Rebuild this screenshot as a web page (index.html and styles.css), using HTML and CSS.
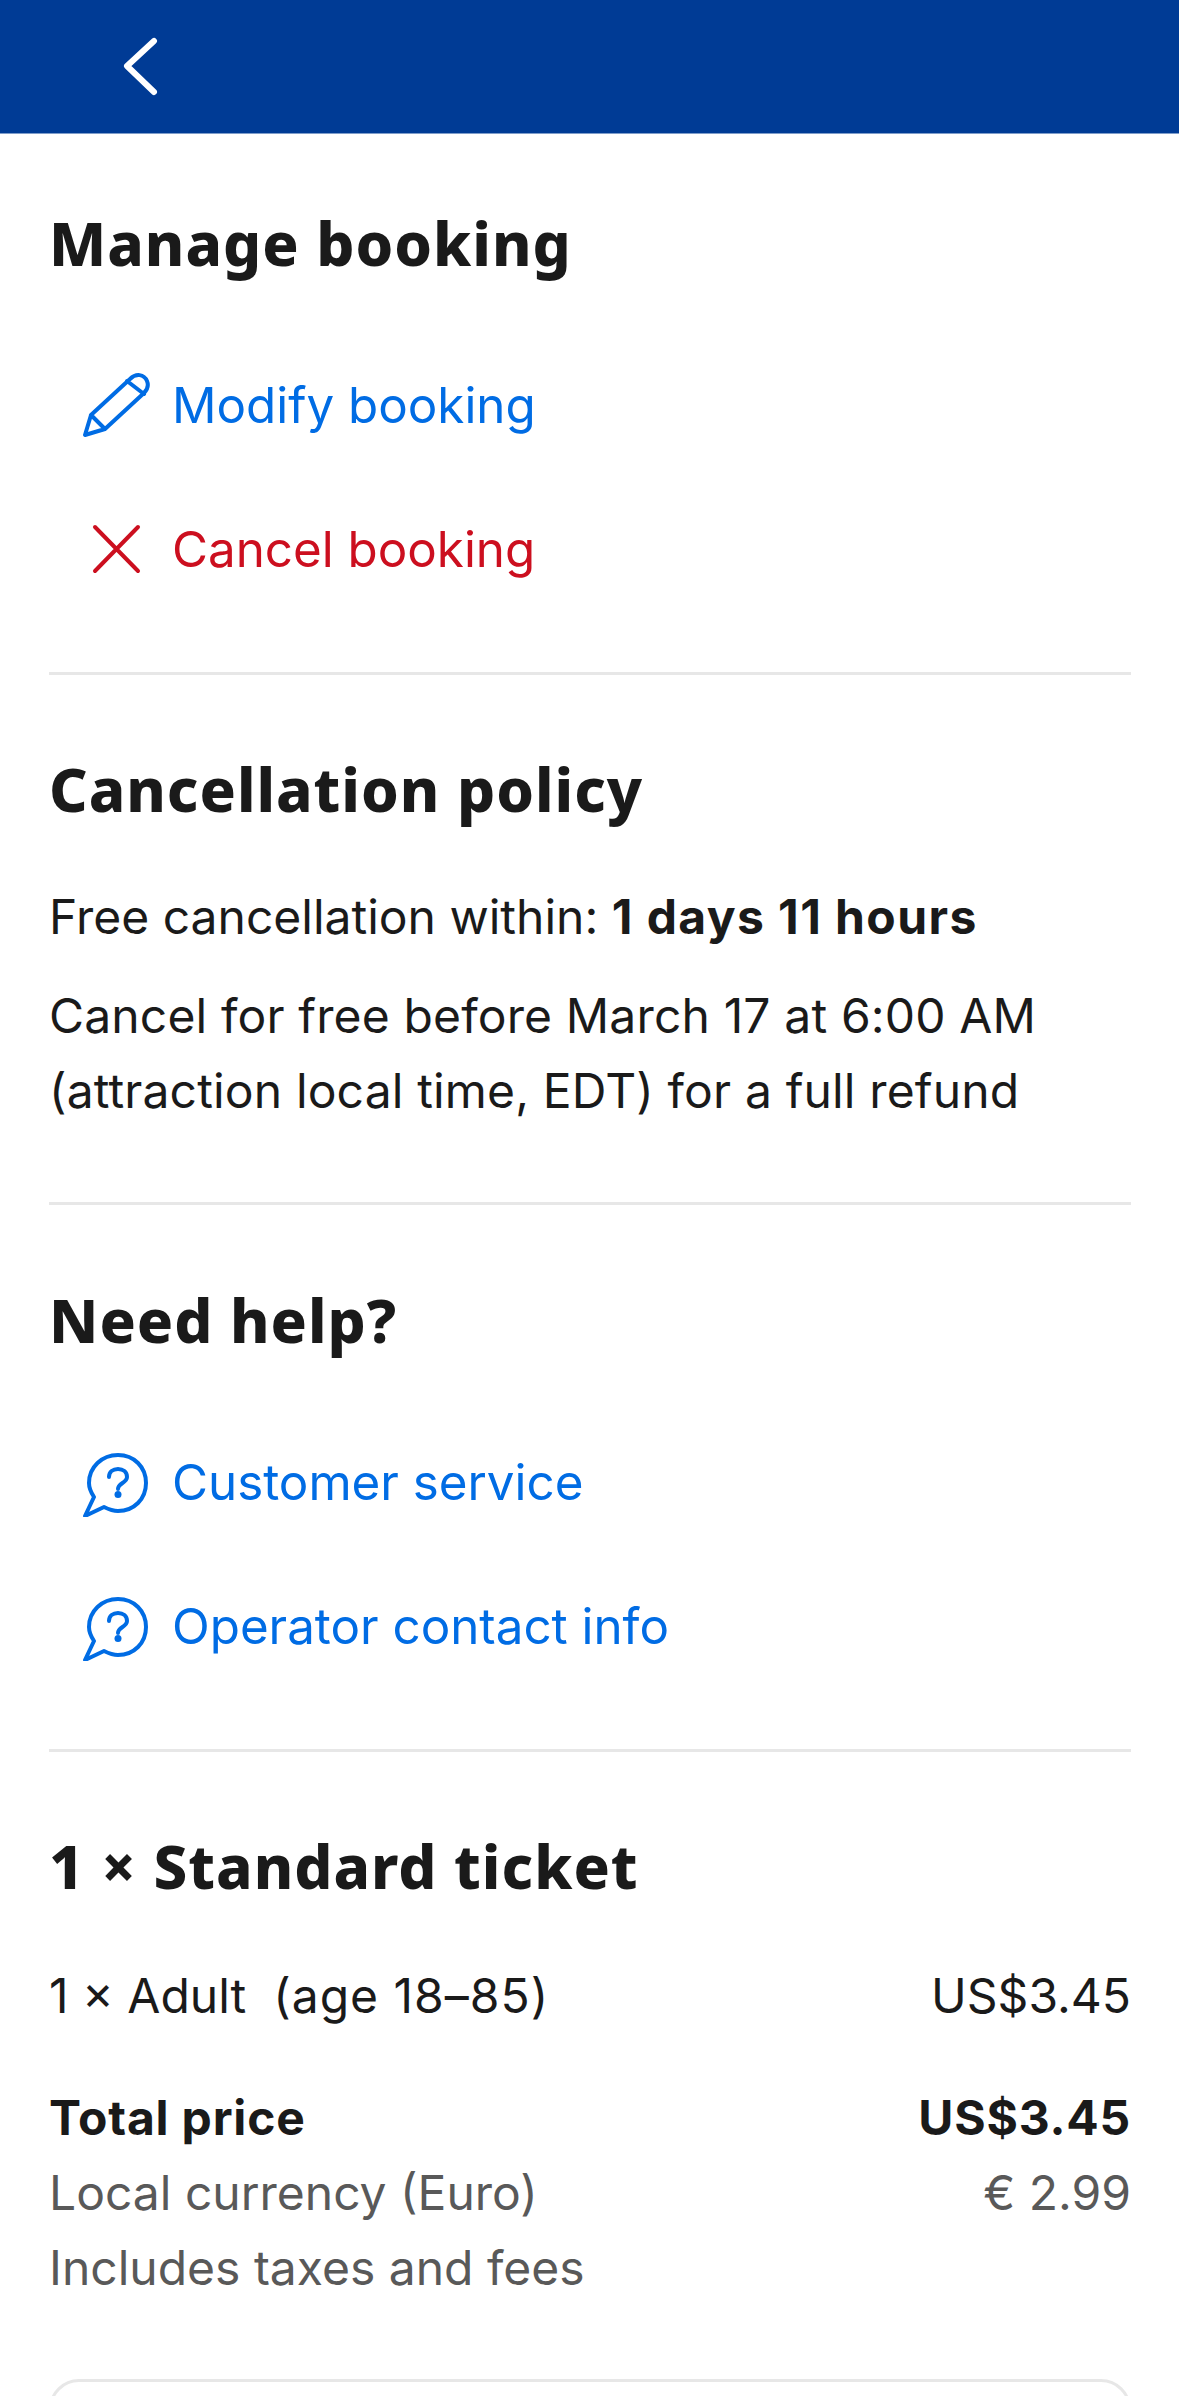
FILE: index.html
```html
<!DOCTYPE html>
<html lang="en">
<head>
<meta charset="utf-8">
<title>Manage booking</title>
<link rel="stylesheet" href="styles.css">
</head>
<body>
<div class="page">
  <header class="topbar">
    <svg class="back" viewBox="0 0 40 60" aria-hidden="true"><path d="M33 4 6 29 33 55"/></svg>
  </header>
  <main class="content">
    <section class="section links-section first">
      <h2 class="title">Manage booking</h2>
      <a class="row blue">
        <svg class="icon" viewBox="20 22 70 70" aria-hidden="true"><path d="M25 87 31 67 70 31C76 25 84 26 87 33 89 38 87 42 84 45L45 81ZM31 67 45 81M67 33 84 46"/></svg>
        <span>Modify booking</span>
      </a>
      <a class="row red">
        <svg class="icon" viewBox="0 0 70 70" aria-hidden="true"><path d="M15 13 58 57M58 13 15 57"/></svg>
        <span>Cancel booking</span>
      </a>
    </section>
    <section class="section policy">
      <h2 class="title">Cancellation policy</h2>
      <p class="free">Free cancellation within: <strong class="wide">1 days 11 hours</strong></p>
      <p class="para">Cancel for free before March 17 at 6:00 AM (attraction local time, EDT) for a full refund</p>
    </section>
    <section class="section links-section">
      <h2 class="title">Need help?</h2>
      <a class="row blue">
        <svg class="icon" viewBox="20 16 70 70" aria-hidden="true"><path d="M25 85 34 66C30 60 29 56 29 52 29 36 42 24 58 24S86 36 86 52 74 80 58 80C54 80 50 79 44 76ZM49 46C49 41 53 38 58 38S67 41 67 46C67 52 58 52 58 58"/><circle class="dot" cx="58" cy="63.500" r="3.500"/></svg>
        <span>Customer service</span>
      </a>
      <a class="row blue">
        <svg class="icon" viewBox="20 16 70 70" aria-hidden="true"><path d="M25 85 34 66C30 60 29 56 29 52 29 36 42 24 58 24S86 36 86 52 74 80 58 80C54 80 50 79 44 76ZM49 46C49 41 53 38 58 38S67 41 67 46C67 52 58 52 58 58"/><circle class="dot" cx="58" cy="63.500" r="3.500"/></svg>
        <span>Operator contact info</span>
      </a>
    </section>
    <section class="ticket">
      <h2 class="title">1 × Standard ticket</h2>
      <div class="line adult"><span>1 × Adult &nbsp;<span class="age">(age 18–85)</span></span><span>US$3.45</span></div>
      <div class="line total"><strong>Total price</strong><strong>US$3.45</strong></div>
      <div class="line muted"><span>Local currency (Euro)</span><span>€ 2.99</span></div>
      <div class="line muted"><span>Includes taxes and fees</span></div>
      <div class="card"></div>
    </section>
  </main>
</div>
</body>
</html>
```
FILE: styles.css
```css
* { box-sizing: border-box; }
html, body { margin: 0; padding: 0; background: #fff; }
.page {
  height: 2396px;
  overflow: hidden;
  font-family: Inter, "Liberation Sans", sans-serif;
  font-size: 48px;
  line-height: 75px;
  color: #1a1a1a;
}
.topbar {
  height: 134px;
  background: #003b95;
  border-bottom: 1px solid #7f9dca;
  display: flex;
  align-items: flex-start;
  padding: 37px 0 0 121px;
}
.back { width: 40px; height: 60px; fill: none; stroke: #fff; stroke-width: 6; stroke-linecap: round; stroke-linejoin: round; }
.content { padding: 0 48px 0 49px; }
.section { border-bottom: 3px solid #e7e7e7; }
.links-section { padding-top: 75px; padding-bottom: 51px; }
.links-section.first { padding-top: 69px; }
.title {
  margin: 0;
  font-family: "Noto Sans", sans-serif;
  font-size: 60px;
  font-weight: 800;
  line-height: 80px;
  letter-spacing: 1px;
  color: #1a1a1a;
}
.row {
  display: flex;
  align-items: center;
  gap: 22px;
  height: 144px;
  padding-left: 31px;
  font-size: 49.300px;
}
.links-section .title { margin-bottom: 50px; }
.blue { color: #006ce4; }
.red { color: #cc0f1f; }
.icon { width: 70px; height: 70px; flex: none; fill: none; stroke: currentColor; stroke-width: 4; stroke-linejoin: round; stroke-linecap: round; }
.dot { fill: currentColor; stroke: none; }
.policy { padding-top: 74px; padding-bottom: 74px; }
.free { margin: 50px 0 0; }
.para { margin: 24px 0 0; letter-spacing: .15px; }
strong { font-weight: 700; letter-spacing: .8px; }
strong.wide { letter-spacing: 1.400px; }
.ticket { padding-top: 74px; }
.line { display: flex; justify-content: space-between; }
.adult { margin-top: 52px; }
.age { letter-spacing: 1px; }
.total { margin-top: 47px; }
.muted { color: #595959; }
.card {
  margin-top: 74px;
  height: 120px;
  border: 3px solid #e7e7e7;
  border-radius: 30px;
}
```
